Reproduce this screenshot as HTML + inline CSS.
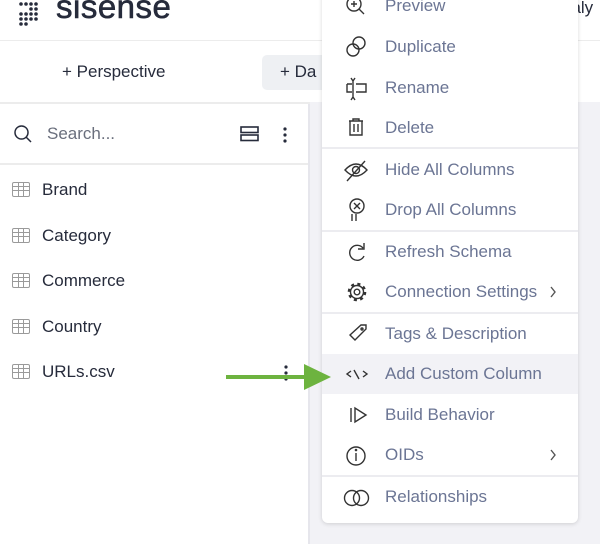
<!DOCTYPE html><html><head><style>
*{margin:0;padding:0;box-sizing:border-box}
body{width:600px;height:544px;overflow:hidden;background:#fff;font-family:"Liberation Sans",sans-serif;position:relative}
.abs{position:absolute}
.li{position:absolute;left:42px;font-size:17px;color:#262b3b}
.ti{position:absolute;left:12px;width:18px;height:15px;border:1.5px solid #9a9a9a;border-radius:2px;background:
linear-gradient(#9a9a9a,#9a9a9a) 0 3px/100% 1px no-repeat,
linear-gradient(#9a9a9a,#9a9a9a) 0 7px/100% 1px no-repeat,
linear-gradient(#9a9a9a,#9a9a9a) 5px 0/1px 100% no-repeat,
linear-gradient(#9a9a9a,#9a9a9a) 10px 0/1px 100% no-repeat}
.mi{position:absolute;left:385px;font-size:17px;color:#6b7594}
.dv{position:absolute;left:322px;width:256px;height:2px;background:#ececf0}
</style></head><body>
<div class="abs" style="left:0;top:40px;width:600px;height:1px;background:#ececec"></div>
<div class="abs" style="left:310px;top:102px;width:290px;height:442px;background:#f2f2f6"></div>
<div class="abs" style="left:0;top:102px;width:310px;height:2px;background:#ececec"></div>
<div class="abs" style="left:308px;top:104px;width:2px;height:440px;background:#e6e6ec"></div>
<svg class="abs" style="left:18px;top:0" width="26" height="26"><g fill="#262b3b"><circle cx="3" cy="4" r="1.8"/><circle cx="8" cy="4" r="1.8"/><circle cx="13" cy="4" r="1.8"/><circle cx="18" cy="4" r="1.8"/><circle cx="13" cy="9" r="1.8"/><circle cx="18" cy="9" r="1.8"/><circle cx="3" cy="14" r="1.8"/><circle cx="8" cy="14" r="1.8"/><circle cx="13" cy="14" r="1.8"/><circle cx="18" cy="14" r="1.8"/><circle cx="3" cy="19" r="1.8"/><circle cx="8" cy="19" r="1.8"/><circle cx="13" cy="19" r="1.8"/><circle cx="18" cy="19" r="1.8"/><circle cx="3" cy="24" r="1.8"/><circle cx="8" cy="24" r="1.8"/></g></svg>
<div class="abs" style="left:56px;top:-12px;font-size:33px;color:#262b3b;letter-spacing:0.5px;-webkit-text-stroke:0.6px #262b3b">sisense</div>
<div class="abs" style="left:562px;top:-2px;font-size:17px;color:#262b3b">naly</div>
<div class="abs" style="left:62px;top:62px;font-size:17px;color:#262b3b">+ Perspective</div>
<div class="abs" style="left:262px;top:55px;width:70px;height:35px;background:#eef0f3;border-radius:5px"></div>
<div class="abs" style="left:280px;top:62px;font-size:17px;color:#262b3b">+ Da</div>
<svg class="abs" style="left:13px;top:124px" width="22" height="22"><circle cx="8.5" cy="8.5" r="6.5" fill="none" stroke="#262b3b" stroke-width="1.5"/><path d="M13 13l5 5" stroke="#262b3b" stroke-width="1.5"/></svg>
<div class="abs" style="left:47px;top:124px;font-size:17px;color:#6a6f7d">Search...</div>
<svg class="abs" style="left:240px;top:126px" width="20" height="16"><rect x="1" y="1" width="17" height="5.5" fill="none" stroke="#262b3b" stroke-width="1.6"/><rect x="1" y="9" width="17" height="5.5" fill="none" stroke="#262b3b" stroke-width="1.6"/></svg>
<svg class="abs" style="left:280px;top:126px" width="10" height="20"><g fill="#262b3b"><circle cx="5" cy="3" r="1.6"/><circle cx="5" cy="9" r="1.6"/><circle cx="5" cy="15" r="1.6"/></g></svg>
<div class="abs" style="left:0;top:163px;width:308px;height:2px;background:#ececec"></div>
<div class="ti" style="top:182px"></div><div class="li" style="top:180px">Brand</div>
<div class="ti" style="top:228px"></div><div class="li" style="top:226px">Category</div>
<div class="ti" style="top:273px"></div><div class="li" style="top:271px">Commerce</div>
<div class="ti" style="top:319px"></div><div class="li" style="top:317px">Country</div>
<div class="ti" style="top:364px"></div><div class="li" style="top:362px">URLs.csv</div>
<svg class="abs" style="left:281px;top:364px" width="10" height="20"><g fill="#262b3b"><circle cx="5" cy="3" r="1.6"/><circle cx="5" cy="9" r="1.6"/><circle cx="5" cy="15" r="1.6"/></g></svg>
<div class="abs" style="left:322px;top:-10px;width:256px;height:533px;background:#fff;border-radius:6px;box-shadow:0 1px 4px rgba(0,0,0,.15)"></div>
<div class="abs" style="left:322px;top:354px;width:256px;height:40px;background:#f2f2f6"></div>
<div class="dv" style="top:147px"></div><div class="dv" style="top:230px"></div><div class="dv" style="top:312px"></div><div class="dv" style="top:475px"></div>
<svg class="abs" style="left:0;top:0" width="600" height="544" fill="none" stroke="#333" stroke-width="1.4">
<circle cx="354" cy="4" r="7"/><path d="M351 4h6M354 1v6M359 9l5 5"/>
<circle cx="359" cy="43" r="6"/><circle cx="353" cy="50" r="6"/>
<path d="M351 78l2 3 2-3M353 81v16M351 100l2-3 2 3M347 84h5M347 84v8h5M356 84h10v8h-10"/>
<path d="M349 121h14M353 121v-2h6v2M350 121v14h12v-14M354 124v8M358 124v8"/>
<path d="M345 170q11-12 22 0q-11 12-22 0z"/><circle cx="356" cy="170" r="3.5"/><path d="M347 181l18-20"/>
<circle cx="357" cy="206" r="7"/><path d="M354 203l6 6M360 203l-6 6M352 214v7M356 214v7"/>
<path d="M363 248a7.5 7.5 0 1 0 1 8M364 243v6h-6"/>
<circle cx="357" cy="292" r="2.8"/><circle cx="357" cy="292" r="6.5"/><circle cx="357" cy="292" r="8" stroke-width="2.6" stroke-dasharray="3 3.3"/>
<path d="M362 325h4v4l-11 11-5-5 11-10z"/><circle cx="362" cy="329" r="1"/>
<path d="M351 371l-4 3 4 3M363 371l4 3-4 3M354 370l5 9"/>
<path d="M351 408v14M355 408v14l11-7z"/>
<circle cx="356" cy="456" r="9"/><path d="M356 453v8"/><circle cx="356" cy="450" r=".6" fill="#333"/>
<circle cx="352" cy="498" r="7.5"/><circle cx="361" cy="498" r="7.5"/>
<path d="M551 287l4 5-4 5M551 450l4 5-4 5" stroke="#555"/>
</svg>
<div class="mi" style="top:-4px">Preview</div>
<div class="mi" style="top:37px">Duplicate</div>
<div class="mi" style="top:78px">Rename</div>
<div class="mi" style="top:118px">Delete</div>
<div class="mi" style="top:160px">Hide All Columns</div>
<div class="mi" style="top:200px">Drop All Columns</div>
<div class="mi" style="top:242px">Refresh Schema</div>
<div class="mi" style="top:282px">Connection Settings</div>
<div class="mi" style="top:324px">Tags &amp; Description</div>
<div class="mi" style="top:364px">Add Custom Column</div>
<div class="mi" style="top:405px">Build Behavior</div>
<div class="mi" style="top:445px">OIDs</div>
<div class="mi" style="top:487px">Relationships</div>
<svg class="abs" style="left:0;top:0" width="600" height="544"><path d="M226 377H306" stroke="#6db33f" stroke-width="4"/><path d="M304 364L331 377L304 390z" fill="#6db33f"/></svg>
</body></html>
